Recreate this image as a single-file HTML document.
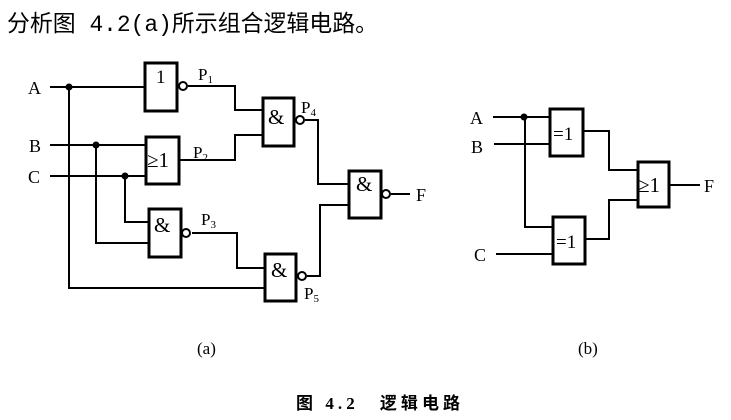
<!DOCTYPE html>
<html><head><meta charset="utf-8"><style>
html,body{margin:0;padding:0;background:#fff;}
svg{display:block}
</style></head><body>
<svg width="731" height="420" viewBox="0 0 731 420" xmlns="http://www.w3.org/2000/svg" font-family="'Liberation Serif','Noto Serif CJK SC',serif">
<text x="7" y="31" font-size="23" font-family="'Liberation Mono','Noto Sans CJK SC',monospace" textLength="371" lengthAdjust="spacingAndGlyphs">分析图 4.2(a)所示组合逻辑电路。</text>
<g fill="none" stroke="#000" stroke-width="2">
<path d="M50 87H144"/>
<path d="M69 87V288H264"/>
<path d="M50 145H145"/>
<path d="M96 145V243H148"/>
<path d="M50 176H145"/>
<path d="M125 176V222H148"/>
<path d="M188 86H235V110H262"/>
<path d="M179 160H235V135H262"/>
<path d="M192 233H237V268H264"/>
<path d="M305 120H318V184H348"/>
<path d="M307 276H320V205H348"/>
<path d="M391 194H410"/>
<path d="M493 117H549"/>
<path d="M494 144H549"/>
<path d="M525 117V227H552"/>
<path d="M496 254H552"/>
<path d="M583 131H609V170H637"/>
<path d="M585 239H609V200H637"/>
<path d="M669 185H700"/>
</g>
<g fill="#fff" stroke="#000" stroke-width="3">
<rect x="145" y="63" width="32" height="48"/>
<rect x="263" y="98" width="31" height="48"/>
<rect x="146" y="137" width="33" height="47"/>
<rect x="149" y="209" width="32" height="48"/>
<rect x="265" y="254" width="31" height="47"/>
<rect x="349" y="171" width="32" height="47"/>
<rect x="550" y="109" width="33" height="47"/>
<rect x="638" y="162" width="31" height="45"/>
<rect x="553" y="217" width="32" height="47"/>
</g>
<g fill="#fff" stroke="#000" stroke-width="2">
<circle cx="183" cy="86" r="4"/>
<circle cx="300" cy="120" r="4"/>
<circle cx="186" cy="233" r="4"/>
<circle cx="302" cy="276" r="4"/>
<circle cx="386" cy="194" r="4"/>
</g>
<g fill="#000">
<circle cx="69" cy="87" r="3.5"/>
<circle cx="96" cy="145" r="3.5"/>
<circle cx="125" cy="176" r="3.5"/>
<circle cx="524" cy="117" r="3.5"/>
</g>
<g font-size="18" fill="#000">
<text x="28" y="94">A</text>
<text x="29" y="152">B</text>
<text x="28" y="183">C</text>
<text x="156" y="83" font-size="19">1</text>
<text x="268" y="124" font-size="21">&amp;</text>
<text x="147" y="167" font-size="21">≥1</text>
<text x="154" y="232" font-size="21">&amp;</text>
<text x="271" y="277" font-size="21">&amp;</text>
<text x="356" y="191" font-size="21">&amp;</text>
<text x="198" y="80" font-size="17">P<tspan font-size="11" dy="3">1</tspan></text>
<text x="193" y="158" font-size="17">P<tspan font-size="11" dy="3">2</tspan></text>
<text x="201" y="225" font-size="17">P<tspan font-size="11" dy="3">3</tspan></text>
<text x="301" y="113" font-size="17">P<tspan font-size="11" dy="3">4</tspan></text>
<text x="304" y="299" font-size="17">P<tspan font-size="11" dy="3">5</tspan></text>
<text x="416" y="201">F</text>
<text x="470" y="124">A</text>
<text x="471" y="153">B</text>
<text x="474" y="261">C</text>
<text x="553" y="140" font-size="19">=1</text>
<text x="556" y="248" font-size="19">=1</text>
<text x="638" y="192" font-size="21">≥1</text>
<text x="704" y="192">F</text>
<text x="197" y="354" font-size="17">(a)</text>
<text x="578" y="354" font-size="17">(b)</text>
</g>
<text x="296" y="409" font-size="17" font-weight="bold" textLength="164" lengthAdjust="spacing" font-family="'Liberation Serif','Noto Sans CJK SC',sans-serif">图 4.2　逻辑电路</text>
</svg>
</body></html>
